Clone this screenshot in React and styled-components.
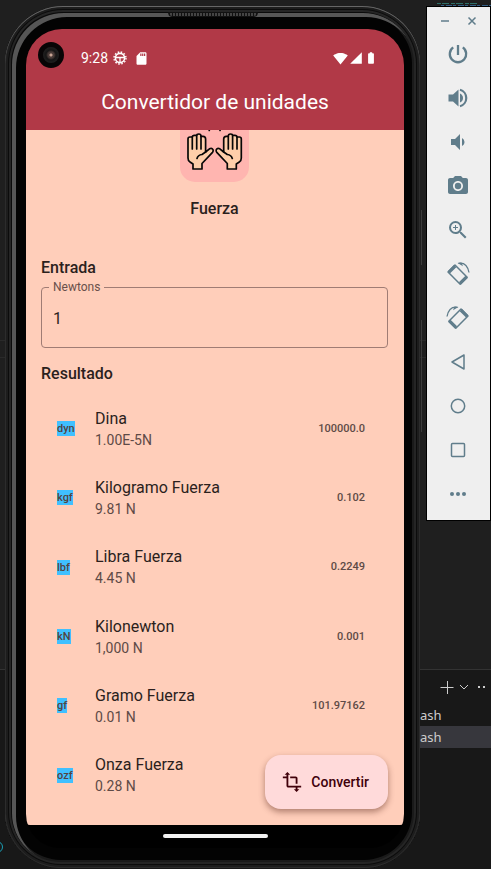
import React, { useState } from "react";
import styled, { createGlobalStyle } from "styled-components";
import {
  MdVolumeDown, MdPhotoCamera, MdZoomIn,
  MdTransform, MdSignalWifi4Bar, MdSignalCellular4Bar, MdBatteryFull, MdSdCard,
} from "react-icons/md";

const GlobalStyle = createGlobalStyle`
  * { box-sizing: border-box; }
  body { margin: 0; background: #1f1f1f; font-family: Roboto, sans-serif; }
  button, input { font: inherit; color: inherit; }
  button { border: 0; padding: 0; background: none; cursor: pointer; }
  svg { display: block; flex: none; }
`;

const Desktop = styled.div`
  position: relative;
  display: grid;
  grid-template-columns: minmax(0, 1fr) 71px;
  min-height: 100vh;
  overflow: hidden;
  background:
    linear-gradient(#2a2a2a, #2a2a2a) 0 340px / 100% 1px no-repeat,
    linear-gradient(#2a2a2a, #2a2a2a) 0 357px / 100% 1px no-repeat,
    linear-gradient(#333 1px, #181818 1px) 0 100% / 100% 200px no-repeat,
    #1f1f1f;
`;

const StatusRing = styled.span`
  position: absolute;
  left: -9px;
  bottom: 16px;
  width: 12px;
  height: 12px;
  border: 1px solid #1a9fb5;
  border-radius: 50%;
`;

/* Phone */
const Phone = styled.main`
  position: relative;
  display: flex;
  flex-direction: column;
  margin: 6px 0 1px 5px;
  padding: 23px 16px 20px 21px;
  border-radius: 58px 58px 56px 56px;
  background: #030303;
  box-shadow:
    inset 0 1px 0 0 #666,
    inset 0 0 0 1px #2c2c2c,
    inset 0 0 0 3px #1d1d1d,
    inset 0 0 0 4px #0c0c0c,
    inset 0 0 0 6px #252525,
    inset 1px 1px 0 6px #0a0a0a,
    inset 4px 4px 0 7px #565656,
    inset 0 0 0 8px #1a1a1a;
`;

const Speaker = styled.span`
  position: absolute;
  top: 6px;
  left: 50%;
  width: 90px;
  height: 5px;
  margin-left: -45px;
  border-radius: 0 0 4px 4px;
  background: repeating-linear-gradient(90deg, #111 0 1px, #444 1px 3px);
  border: 1px solid #111;
`;

const SideKey = styled.span`
  position: absolute;
  right: -2px;
  top: ${(p) => p.$top}px;
  width: 1px;
  height: ${(p) => p.$length}px;
  background: #3c3c3c;
`;

const Screen = styled.div`
  flex: 1;
  display: flex;
  flex-direction: column;
  overflow: hidden;
  border-radius: 36px 36px 34px 34px;
  background: #000;
`;

const AppBar = styled.header`
  padding: 13px 26px 14px 12px;
  color: #fff;
  background: #b13947;
`;

const StatusBar = styled.div`
  display: flex;
  align-items: flex-end;
  height: 26px;
  font-size: 14px;
  line-height: 20px;
`;

const Camera = styled.span`
  width: 26px;
  height: 26px;
  margin-right: 17px;
  border: 5px solid #080506;
  border-radius: 50%;
  background: radial-gradient(circle, #c9a595 0 1px, #493b38 2px 3px, #151515 5px, #202020 8px);
`;

const StatusIcons = styled.span`
  display: flex;
  align-items: center;
  height: 20px;
  gap: ${(p) => p.$gap}px;
  margin-left: ${(p) => (p.$end ? "auto" : "5px")};
`;

const Title = styled.h1`
  margin: 20px 0 0 14px;
  font-size: 21px;
  line-height: 28px;
  font-weight: 400;
  text-align: center;
`;

const Body = styled.section`
  position: relative;
  flex: 1;
  display: flex;
  flex-direction: column;
  padding: 0 16px 15px 15px;
  border-radius: 0 0 4px 4px;
  background: #ffceba;
  color: #2b1f1d;
`;

const Scrolled = styled.div`
  display: flex;
  justify-content: center;
  align-items: flex-end;
  height: 52px;
  overflow: hidden;
`;

const Card = styled.div`
  border-radius: 15px;
  background: #ffb5b0;
`;

const Heading = styled.h2`
  margin: ${(p) => p.$gap}px 0 0;
  font-size: 16px;
  line-height: 24px;
  font-weight: 500;
  text-align: ${(p) => (p.$center ? "center" : "left")};
`;

const Field = styled.fieldset`
  min-width: 0;
  margin: 0;
  padding: 0 11px 5px 7px;
  border: 1px solid #a07c74;
  border-radius: 4px;
`;

const Legend = styled.legend`
  padding: 0 4px;
  font-size: 12px;
  line-height: 14px;
  color: #69504b;
`;

const Entry = styled.input`
  display: block;
  width: 100%;
  height: 48px;
  padding: 0 4px;
  border: 0;
  outline: 0;
  background: transparent;
  font-size: 16px;
`;

const Results = styled.ul`
  flex: 1;
  display: grid;
  grid-auto-rows: 1fr;
  margin: 8px 0 0;
  padding: 0;
  list-style: none;
`;

const Result = styled.li`
  display: grid;
  grid-template-columns: 38px 1fr auto;
  align-items: center;
  padding: 0 23px 0 16px;
`;

const Unit = styled.abbr`
  justify-self: start;
  font-size: 11px;
  line-height: 15px;
  font-weight: 500;
  color: #534341;
  background: #40c0ff;
`;

const Name = styled.div`
  font-size: 16px;
  line-height: 22px;
`;

const Equivalence = styled.div`
  font-size: 14px;
  line-height: 20px;
  color: #5e4a46;
`;

const Value = styled.output`
  font-size: 11px;
  line-height: 16px;
  font-weight: 500;
  color: #5e4a46;
`;

const ConvertButton = styled.button`
  position: absolute;
  right: 16px;
  bottom: 16px;
  display: flex;
  align-items: center;
  gap: 8px;
  height: 54px;
  padding: 0 19px 0 16px;
  border-radius: 16px;
  background: #ffdada;
  color: #40000a;
  font-size: 14px;
  font-weight: 500;
  box-shadow: 0 3px 6px rgba(80, 30, 20, 0.45);
`;

const GestureBar = styled.div`
  display: flex;
  justify-content: center;
  height: 23px;
  padding-top: 9px;
`;

const Pill = styled.span`
  width: 105px;
  height: 4px;
  border-radius: 2px;
  background: #f2f2f2;
`;

/* Right side of the desktop */
const Side = styled.aside`
  display: flex;
  flex-direction: column;
`;

const CodeStrip = styled.div`
  display: flex;
  justify-content: flex-end;
  height: 6px;
  overflow: hidden;
`;

const Toolbar = styled.nav`
  display: flex;
  flex-direction: column;
  align-items: center;
  margin-left: 6px;
  padding: 0 1px 4px 0;
  border: 1px solid #000;
  background: #efefef;
  color: #607d8b;
`;

const WindowControls = styled.div`
  display: flex;
  justify-content: center;
  align-items: center;
  gap: 15px;
  height: 25px;
  padding-top: 3px;
`;

const ControlButton = styled.button`
  display: grid;
  place-items: center;
  width: 12px;
  height: 12px;
`;

const ToolButton = styled.button`
  display: grid;
  place-items: center;
  width: 44px;
  height: 44px;
`;

const Terminal = styled.section`
  height: 199px;
  margin-top: auto;
  color: #ccc;
  font-family: "Noto Sans", sans-serif;
  font-size: 13px;
`;

const TerminalActions = styled.div`
  display: flex;
  align-items: center;
  gap: 6px;
  height: 34px;
  padding-left: 20px;
`;

const TerminalTab = styled.button`
  display: block;
  width: 100%;
  height: 22px;
  text-align: left;
  background: ${(p) => (p.$selected ? "#37373d" : "transparent")};
`;

const Stroke = ({ size = 24, width = 2, box = 24, children }) => (
  <svg width={size} height={size} viewBox={`0 0 ${box} ${box}`} fill="none" stroke="currentColor" strokeWidth={width}>
    {children}
  </svg>
);

const Hand = () => (
  <g>
    <path
      fill="#ffceaa"
      d="M13 56V51L10 49Q8 48 8 45V26Q8 24 10 24H12.3V24Q12.3 22.3 14.5 22.3H16.7Q16.7 21 18.8 21Q21 21 21 23.3H23Q25.6 23.3 25.6 26V39L29.5 35.8Q32 34.8 33 36.6Q33.6 38 32.5 39.4L22 50.5V56Z"
    />
    <path d="M12.3 24V36M16.7 22.5V36M21 23.3V36M17 45.5Q18 42 22 41.5L25.6 39" />
  </g>
);

const HandsDrawing = () => (
  <svg width="69" height="69" viewBox="0 0 69 69" fill="none" stroke="#090707" strokeWidth="1.7" strokeLinecap="round" strokeLinejoin="round">
    <path d="M28.500 15l.8 2.500M34.600 14v2M40.800 15l-.8 2.500" />
    <Hand />
    <g transform="translate(69.300 0) scale(-1 1)"><Hand /></g>
  </svg>
);

const RotateDrawing = ({ right }) => (
  <svg width="24" height="24" viewBox="0 0 24 24">
    <g transform={right ? "translate(24 0) scale(-1 1)" : undefined} fill="none" stroke="currentColor">
      <path strokeWidth="1.500" strokeLinejoin="round" d="M9 3L21.200 15.200L14.200 22.200L2 10Z" />
      <path strokeWidth="3.200" d="M9.200 4L2.800 10.400M20.600 14.800L14 21.400" />
      <path strokeWidth="1.300" d="M12.500 1.300Q21 0 23 10.500" />
      <path fill="currentColor" stroke="none" d="M11.500 1L15.500 .6L17 4.200Z" />
    </g>
  </svg>
);

const VolumeUpDrawing = () => (
  <Stroke width={2.2}>
    <path fill="currentColor" stroke="none" d="M2.500 8.500H7L12.500 3.500V20.500L7 15.500H2.500ZM14 7.500Q17 9 17 12Q17 15 14 16.500Z" />
    <path d="M14 3.800A8.500 8.500 0 0 1 14 20.200" />
  </Stroke>
);

const WheelDrawing = () => (
  <Stroke size={14} box={14} width={1.6}>
    <circle cx="7" cy="7" r="4.600" />
    <circle cx="7" cy="7" r="6" strokeWidth="1.400" strokeDasharray="1.600 1.540" />
    <path strokeWidth="1.300" d="M2.500 6.500H11.500M7 7V11" />
  </Stroke>
);

const MinimapDrawing = () => (
  <svg width="54" height="6" viewBox="0 0 54 6" strokeWidth="1">
    <path stroke="#2c6f68" strokeDasharray="4 1 7 2" d="M0 3.500H42" />
    <path stroke="#356087" strokeDasharray="3 2 6 1" d="M4 5.500H54" />
  </svg>
);

const tools = [
  ["Encender", <Stroke width={2.3}><path d="M12 3V13M7.200 5.400A8.200 8.200 0 1 0 16.800 5.400" /></Stroke>],
  ["Subir volumen", <VolumeUpDrawing />],
  ["Bajar volumen", <MdVolumeDown size={24} />],
  ["Captura", <MdPhotoCamera size={24} />],
  ["Zoom", <MdZoomIn size={24} />],
  ["Girar a la izquierda", <RotateDrawing />],
  ["Girar a la derecha", <RotateDrawing right />],
  ["Atrás", <Stroke width={1.5}><path strokeLinejoin="round" d="M18 5V19L6 12Z" /></Stroke>],
  ["Inicio", <Stroke width={1.5}><circle cx="12" cy="12" r="6.700" /></Stroke>],
  ["Recientes", <Stroke width={1.5}><rect x="5.500" y="5.500" width="13" height="13" rx="1" /></Stroke>],
  ["Más", <svg width="24" height="24" fill="currentColor"><circle cx="6" cy="12" r="2" /><circle cx="12" cy="12" r="2" /><circle cx="18" cy="12" r="2" /></svg>],
];

const results = [
  { unit: "dyn", name: "Dina", equivalence: "1.00E-5N", value: "100000.0" },
  { unit: "kgf", name: "Kilogramo Fuerza", equivalence: "9.81 N", value: "0.102" },
  { unit: "lbf", name: "Libra Fuerza", equivalence: "4.45 N", value: "0.2249" },
  { unit: "kN", name: "Kilonewton", equivalence: "1,000 N", value: "0.001" },
  { unit: "gf", name: "Gramo Fuerza", equivalence: "0.01 N", value: "101.97162" },
  { unit: "ozf", name: "Onza Fuerza", equivalence: "0.28 N" },
];

export default function App() {
  const [amount, setAmount] = useState("1");
  return (
    <>
      <GlobalStyle />
      <Desktop>
        <StatusRing />
        <Phone>
          <Speaker />
          <SideKey $top={204} $length={55} />
          <SideKey $top={314} $length={112} />
          <Screen>
            <AppBar>
              <StatusBar>
                <Camera />
                <span>9:28</span>
                <StatusIcons $gap={7}><WheelDrawing /><MdSdCard size={15} /></StatusIcons>
                <StatusIcons $end $gap={1}>
                  <MdSignalWifi4Bar size={15} />
                  <MdSignalCellular4Bar size={14} />
                  <MdBatteryFull size={14} />
                </StatusIcons>
              </StatusBar>
              <Title>Convertidor de unidades</Title>
            </AppBar>
            <Body>
              <Scrolled><Card><HandsDrawing /></Card></Scrolled>
              <Heading $gap={15} $center>Fuerza</Heading>
              <Heading $gap={35}>Entrada</Heading>
              <Field>
                <Legend><label htmlFor="newtons">Newtons</label></Legend>
                <Entry id="newtons" inputMode="decimal" value={amount} onChange={(e) => setAmount(e.target.value)} />
              </Field>
              <Heading $gap={14}>Resultado</Heading>
              <Results>
                {results.map(({ unit, name, equivalence, value }) => (
                  <Result key={unit}>
                    <Unit>{unit}</Unit>
                    <div>
                      <Name>{name}</Name>
                      <Equivalence>{equivalence}</Equivalence>
                    </div>
                    {value && <Value>{value}</Value>}
                  </Result>
                ))}
              </Results>
              <ConvertButton type="button"><MdTransform size={22} />Convertir</ConvertButton>
            </Body>
            <GestureBar><Pill /></GestureBar>
          </Screen>
        </Phone>
        <Side>
          <CodeStrip><MinimapDrawing /></CodeStrip>
          <Toolbar aria-label="Emulador">
            <WindowControls>
              <ControlButton aria-label="Minimizar"><Stroke size={12} box={12} width={1.5}><path d="M2 6H10" /></Stroke></ControlButton>
              <ControlButton aria-label="Cerrar"><Stroke size={12} box={12} width={1.5}><path d="M2.500 2.500L9.500 9.500M9.500 2.500L2.500 9.500" /></Stroke></ControlButton>
            </WindowControls>
            {tools.map(([label, icon]) => (
              <ToolButton key={label} type="button" aria-label={label}>{icon}</ToolButton>
            ))}
          </Toolbar>
          <Terminal>
            <TerminalActions>
              <ControlButton aria-label="Nueva terminal"><Stroke size={14} box={14} width={1}><path d="M.5 6.500H13.500M7.500 0V13" /></Stroke></ControlButton>
              <ControlButton aria-label="Perfiles"><Stroke size={10} box={10} width={1}><path d="M1 3L5 7L9 3" /></Stroke></ControlButton>
              <ControlButton aria-label="Más acciones"><svg width="8" height="4" viewBox="0 0 8 4" fill="currentColor"><rect x="0" y="1" width="2" height="2" /><rect x="5" y="1" width="2" height="2" /></svg></ControlButton>
            </TerminalActions>
            <TerminalTab>ash</TerminalTab>
            <TerminalTab $selected>ash</TerminalTab>
          </Terminal>
        </Side>
      </Desktop>
    </>
  );
}
